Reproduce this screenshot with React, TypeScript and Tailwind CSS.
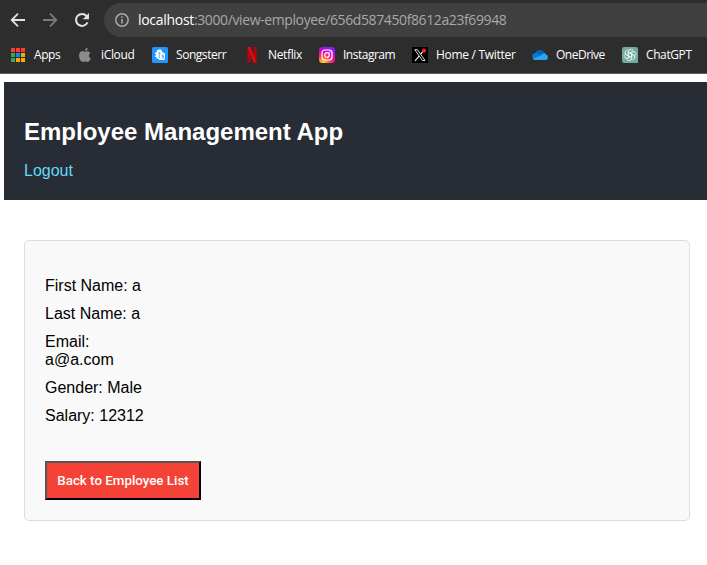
import type { ReactNode } from "react";

const icon = "block h-4 w-4 shrink-0";

function AppsIcon() {
  const colors = ["#ff3b30", "#ff3b30", "#ff3b30", "#34a853", "#1a82f7", "#fbab05", "#34a853", "#fbab05", "#fbab05"];
  return (
    <svg className={icon} viewBox="0 0 16 16" shapeRendering="crispEdges">
      {colors.map((c, i) => (
        <rect key={i} x={1 + (i % 3) * 5} y={1 + Math.floor(i / 3) * 5} width="4" height="4" fill={c} />
      ))}
    </svg>
  );
}

function AppleIcon() {
  return (
    <svg className={icon} viewBox="0 0 16 16" fill="#8b8b8b">
      <path d="M10.7 0.8C9.2 1 7.9 2.3 8.1 4 9.7 4 10.9 2.5 10.7 .8ZM8.3 5C7.6 5 6.7 4.3 5.5 4.3 3.7 4.3 2 5.8 2 8.5 2 11.2 4 15 5.8 15 6.7 15 7.2 14.4 8.3 14.4 9.4 14.4 9.8 15 10.7 15 12.1 15 13.3 12.8 13.8 11.3 11.5 10.2 11.3 7.2 13.3 5.9 12.5 4.8 11.4 4.3 10.4 4.3 9.5 4.3 8.9 5 8.3 5Z" />
    </svg>
  );
}

function SongsterrIcon() {
  return (
    <svg className={icon} viewBox="0 0 16 16">
      <rect width="16" height="16" rx="1.5" fill="#2196ff" />
      <path d="M5 3.5 6.5 2.5H9.5V4L11 5.5 13 6.5V11.5L12 13H7V12L4.5 11.5V10H3V8.5H4V7H3V5.5H4.5Z" fill="#fff" />
      <path d="M7.2 4.8V10.5L8.2 11.4M7.2 6.6H8.6M11.8 8H9.9V9.4H11.7V11H9.6" fill="none" stroke="#2196ff" strokeWidth=".75" />
    </svg>
  );
}

function NetflixIcon() {
  return (
    <svg className={icon} viewBox="0 0 16 16">
      <path d="M3.5 0h3v15.6l-3 .4ZM9.5 0h3v16l-3-.4Z" fill="#b1060f" />
      <path d="M3.5 0h3l6 16-3-.4Z" fill="#e50914" />
    </svg>
  );
}

function InstagramIcon() {
  return (
    <svg className={icon} viewBox="0 0 16 16">
      <defs>
        <radialGradient id="insta" cx=".25" cy="1.05" r="1.05">
          <stop offset="0" stopColor="#ffdd55" />
          <stop offset=".2" stopColor="#ffb02e" />
          <stop offset=".45" stopColor="#ff3d55" />
          <stop offset=".72" stopColor="#ee00b5" />
          <stop offset="1" stopColor="#7c20ff" />
        </radialGradient>
      </defs>
      <rect width="16" height="16" rx="3.5" fill="url(#insta)" />
      <rect x="3" y="3" width="10" height="10" rx="3" fill="none" stroke="#fff" strokeWidth="1.2" />
      <circle cx="8" cy="8" r="2.3" fill="none" stroke="#fff" strokeWidth="1.2" />
      <circle cx="10.9" cy="5.1" r=".7" fill="#fff" />
    </svg>
  );
}

function XIcon() {
  return (
    <svg className={icon} viewBox="0 0 16 16">
      <rect width="16" height="16" fill="#000" />
      <path d="M2.8 2.7H5.4L13 13.5H10.4Z" fill="none" stroke="#ddd" strokeWidth="1" />
      <path d="M11.5 3.8 8.8 7M7.3 9 3 13.8" fill="none" stroke="#ddd" strokeWidth="1.2" />
      <circle cx="12" cy="3.7" r="2.1" fill="#f4212e" />
    </svg>
  );
}

function OneDriveIcon() {
  return (
    <svg className={icon} viewBox="0 0 16 16">
      <path d="M3.2 6.2C5 2.2 10.6 1.8 12.3 6.2L9 10H1.5C-.5 8.7 0 6.3 3.2 6.2Z" fill="#0864c2" />
      <path d="M1 11.8C-1 8.2 1.8 5.2 5.2 6.4L12 10 5 13H3C2 13 1.4 12.5 1 11.8Z" fill="#087bd8" />
      <path d="M9.5 8.3C10.5 6 13.2 5.4 14.2 7.7 16.7 8.3 16.5 13 13.5 13H3C2 13 1.3 12.4 1 11.8Z" fill="#28a8ea" />
    </svg>
  );
}

function ChatGptIcon() {
  return (
    <svg className={icon} viewBox="0 0 16 16">
      <path d="M2.2 0H13.8Q16 0 16 2.2V16H2.2Q0 16 0 13.8V2.2Q0 0 2.2 0Z" fill="#74aa9c" />
      <g fill="none" stroke="#fff" strokeWidth=".65">
        {[0, 60, 120, 180, 240, 300].map((a) => (
          <path key={a} transform={`rotate(${a} 8 8)`} d="M6.2 9.1V4.6A2.9 2.9 0 0 1 11.3 3.3M6.2 7 9.7 5A2.7 2.7 0 0 1 12.6 5.3" />
        ))}
      </g>
    </svg>
  );
}

const bookmarks: { label: string; box: string; text: string; icon: ReactNode }[] = [
  { label: "Apps", box: "w-[67px]", text: "tracking-[-0.45px]", icon: <AppsIcon /> },
  { label: "iCloud", box: "w-[75px]", text: "tracking-[-0.35px]", icon: <AppleIcon /> },
  { label: "Songsterr", box: "w-[92px]", text: "tracking-[-0.45px]", icon: <SongsterrIcon /> },
  { label: "Netflix", box: "w-[75px]", text: "tracking-[-0.35px]", icon: <NetflixIcon /> },
  { label: "Instagram", box: "w-[93px]", text: "tracking-[-0.5px]", icon: <InstagramIcon /> },
  { label: "Home / Twitter", box: "w-[120px]", text: "tracking-[-0.3px]", icon: <XIcon /> },
  { label: "OneDrive", box: "w-[90px]", text: "tracking-[-0.5px]", icon: <OneDriveIcon /> },
  { label: "ChatGPT", box: "w-[85px]", text: "tracking-[-0.4px]", icon: <ChatGptIcon /> },
];

function BrowserBar() {
  return (
    <div className="h-[74px] overflow-hidden border-b border-[#5c5c5c] bg-[#2d2d2d] font-['Open_Sans',sans-serif]">
      <div className="flex h-10 items-center pl-[10px]">
        <svg className="h-4 w-4" viewBox="0 0 16 16" fill="none" stroke="#e3e3e3" strokeWidth="1.8">
          <path d="M15 8H2M8 1.7 1.7 8 8 14.3" />
        </svg>
        <svg className="ml-4 h-4 w-4" viewBox="0 0 16 16" fill="none" stroke="#7b7b7b" strokeWidth="1.8">
          <path d="M1 8h13M8 1.7 14.3 8 8 14.3" />
        </svg>
        <svg className="ml-4 h-4 w-4" viewBox="0 0 16 16">
          <path d="M13.5 10.4A6 6 0 1 1 12.6 4" fill="none" stroke="#e3e3e3" strokeWidth="2" />
          <path d="M15 1v6.2H8.8Z" fill="#e3e3e3" />
        </svg>
        <div className="ml-[14px] flex h-[34px] flex-1 items-center rounded-l-[17px] bg-[#404040] pl-[11px]">
          <svg className="h-[14px] w-[14px]" viewBox="0 0 14 14" fill="none" stroke="#a9a9a9" strokeWidth="1.5">
            <circle cx="7" cy="7" r="6.2" />
            <path d="M7 6v4.5M7 3.2v1.6" />
          </svg>
          <span className="ml-[9px] whitespace-nowrap text-sm tracking-[-0.39px] text-[#a8a8a8]">
            <span className="tracking-[-0.3px] text-white">localhost</span>
            :3000/view-employee/656d587450f8612a23f69948
          </span>
        </div>
      </div>
      <div className="flex h-[30px] items-center pl-[10px]">
        {bookmarks.map((b) => (
          <div key={b.label} className={`flex shrink-0 items-center gap-2 ${b.box}`}>
            {b.icon}
            <span className={`whitespace-nowrap text-xs font-medium leading-4 text-white ${b.text}`}>{b.label}</span>
          </div>
        ))}
      </div>
    </div>
  );
}

export default function App() {
  return (
    <div className="h-[565px] w-[707px] overflow-hidden bg-white font-['Liberation_Sans',Arial,sans-serif] text-base leading-[18px] text-black">
      <BrowserBar />
      <header className="ml-1 mt-2 h-[118px] bg-[#282c34] px-5 pt-9">
        <h1 className="text-2xl font-bold leading-7 text-white">Employee Management App</h1>
        <a className="mt-4 block text-[#61dafb]">Logout</a>
      </header>
      <main className="ml-6 mt-10 h-[281px] w-[666px] rounded-[5px] border border-[#ddd] bg-[#f9f9f9] px-5 pt-9">
        <div className="flex w-[100px] flex-col gap-[10px]">
          <p className="whitespace-nowrap">First Name: a</p>
          <p className="whitespace-nowrap">Last Name: a</p>
          <p>Email:<br />a@a.com</p>
          <p className="whitespace-nowrap">Gender: Male</p>
          <p className="whitespace-nowrap">Salary: 12312</p>
        </div>
        <button className="mt-9 block h-[39px] w-[156px] whitespace-nowrap border-2 border-b-black border-l-[#555] border-r-black border-t-[#555] bg-[#f44336] font-['Roboto',sans-serif] text-[13.333px] font-medium leading-[15px] text-white">
          Back to Employee List
        </button>
      </main>
    </div>
  );
}
